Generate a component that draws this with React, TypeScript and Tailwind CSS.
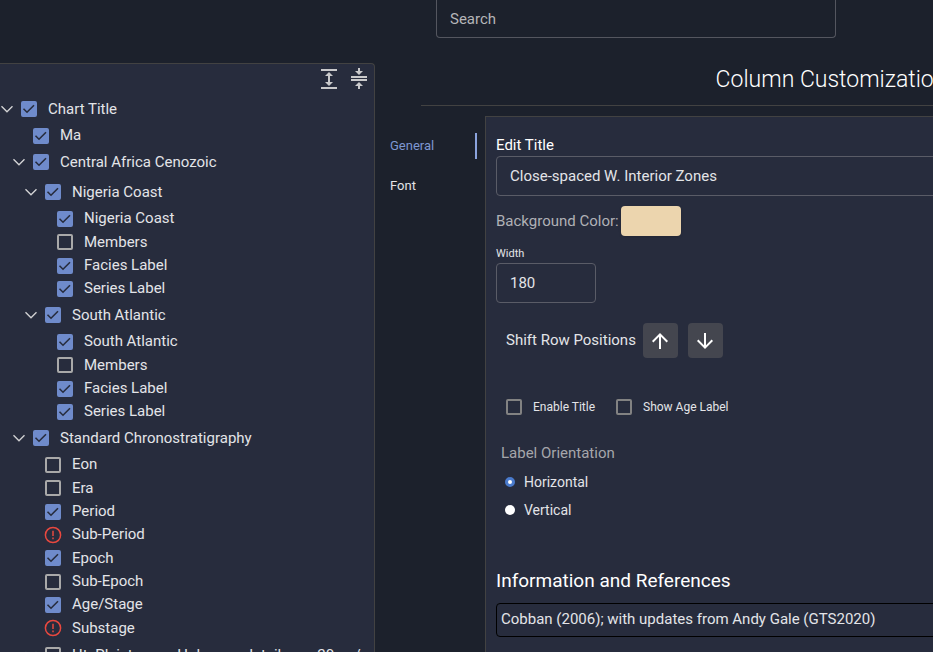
import React, { useState } from "react";

type Node = {
  label: string;
  state?: "on" | "off" | "error";
  children?: Node[];
};

const facies = (name: string): Node => ({
  label: name,
  children: [
    { label: name },
    { label: "Members", state: "off" },
    { label: "Facies Label" },
    { label: "Series Label" },
  ],
});

const tree: Node = {
  label: "Chart Title",
  children: [
    { label: "Ma" },
    {
      label: "Central Africa Cenozoic",
      children: [facies("Nigeria Coast"), facies("South Atlantic")],
    },
    {
      label: "Standard Chronostratigraphy",
      children: [
        { label: "Eon", state: "off" },
        { label: "Era", state: "off" },
        { label: "Period" },
        { label: "Sub-Period", state: "error" },
        { label: "Epoch" },
        { label: "Sub-Epoch", state: "off" },
        { label: "Age/Stage" },
        { label: "Substage", state: "error" },
        {
          label: "Ht. Pleistocene-Holocene detail over 20my/",
          state: "off",
          children: [],
        },
      ],
    },
  ],
};

function Tick({ label, on, dim }: { label: string; on: boolean; dim?: boolean }) {
  const [checked, setChecked] = useState(on);
  return (
    <span className="relative flex size-4 shrink-0">
      <input
        type="checkbox"
        aria-label={label}
        checked={checked}
        onChange={() => setChecked(!checked)}
        className={
          "size-4 appearance-none rounded-xs border-2 checked:border-[#6f8bcb] checked:bg-[#6f8bcb] " +
          (dim ? "border-[#828282]" : "border-[#a9a9a9]")
        }
      />
      {checked && (
        <svg viewBox="0 0 16 16" className="pointer-events-none absolute inset-0 size-4" fill="none" stroke="#272c3d" strokeWidth="1.6">
          <path d="M2.5 7.8 6 11.2 13 4.2" />
        </svg>
      )}
    </span>
  );
}

function ErrorIcon() {
  return (
    <svg viewBox="0 0 18 18" className="-mx-px size-[18px] shrink-0" fill="none" stroke="#e8483f" strokeWidth="1.5">
      <circle cx="9" cy="9" r="7.6" />
      <path d="M9 4.8v5.2M9 11.5v1.7" />
    </svg>
  );
}

function Branch({ node }: { node: Node }) {
  const branch = !!node.children;
  return (
    <li className={branch ? "" : "h-[23px] nth-[3n+2]:h-6"}>
      <div className={"flex items-center whitespace-nowrap " + (branch ? "h-[30px]" : "h-full")}>
        <span className="flex w-[21px] shrink-0">
          {branch && (
            <button aria-label={"Toggle " + node.label}>
              <svg viewBox="0 0 14 14" className="size-3.5" fill="none" stroke="#d0d0d2" strokeWidth="1.4">
                <path d="M1.5 4.2 7 9.8l5.5-5.6" />
              </svg>
            </button>
          )}
        </span>
        {node.state === "error" ? <ErrorIcon /> : <Tick label={node.label} on={node.state !== "off"} />}
        <span className="ml-[11px]">{node.label}</span>
      </div>
      {branch && (
        <ul className="pl-3">
          {node.children!.map((child) => (
            <Branch key={child.label} node={child} />
          ))}
        </ul>
      )}
    </li>
  );
}

function ShiftButton({ label, d }: { label: string; d: string }) {
  return (
    <button aria-label={label} className="flex size-[35px] items-center justify-center rounded bg-[#44464f]">
      <svg viewBox="0 0 24 24" className="size-6" fill="#fff">
        <path d={d} />
      </svg>
    </button>
  );
}

export default function App() {
  return (
    <div className="flex h-screen flex-col overflow-hidden bg-[#1c212c] font-['Roboto','Liberation_Sans',sans-serif] text-[15px] text-[#e3e4e8]">
      <header className="flex h-[63px] shrink-0 items-start pl-[436px]">
        <input
          aria-label="Search"
          placeholder="Search"
          className="h-[38px] w-[400px] rounded-b border border-t-0 border-[#54565f] bg-transparent px-[13px] placeholder:text-[#b5b5b8]"
        />
      </header>
      <main className="flex min-h-0 flex-1">
        <aside className="w-[375px] shrink-0 overflow-hidden rounded-tr border-t border-r border-[#424242] bg-[#272c3d]">
          <div className="flex h-[30px] items-center justify-end gap-1.5 pr-[3px]">
            <button aria-label="Expand all">
              <svg viewBox="0 0 24 24" className="size-6" fill="#c9c9cb">
                <path d="M4 2h16v2H4zM4 20h16v2H4zM13 9h3l-4-4-4 4h3v6H8l4 4 4-4h-3z" />
              </svg>
            </button>
            <button aria-label="Collapse all">
              <svg viewBox="0 0 24 24" className="size-6" fill="#c9c9cb">
                <path d="M8 19h3v3h2v-3h3l-4-4zM16 4h-3V1h-2v3H8l4 4zM4 9v2h16V9zM4 12v2h16v-2z" />
              </svg>
            </button>
          </div>
          <ul>
            <Branch node={tree} />
          </ul>
        </aside>
        <section className="flex min-w-0 flex-1 flex-col">
          <h1 className="ml-[46px] flex h-[43px] min-w-[820px] items-center justify-center border-b border-[#424242] pb-2 text-[23px] font-light text-white">
            Column Customization
          </h1>
          <div className="flex min-h-0 flex-1 pt-2.5">
            <nav className="flex w-[110px] shrink-0 flex-col pt-2.5 pl-[15px] text-[13px]">
              <button className="flex h-10 items-center text-left text-[#7e97d2]">
                <span className="w-[85px]">General</span>
                <span className="h-[26px] w-0.5 bg-[#8ba3dd]" />
              </button>
              <button className="flex h-10 items-center text-left">Font</button>
            </nav>
            <div className="min-w-[760px] flex-1 border-t border-l border-[#424242] bg-[#272c3d] px-2.5">
              <label className="flex flex-col pt-4">
                <span className="h-[23px] leading-6 text-white">Edit Title</span>
                <input defaultValue="Close-spaced W. Interior Zones" className="h-10 rounded border border-[#5a5c67] bg-transparent px-[13px]" />
              </label>
              <div className="flex h-[50px] items-center gap-0.5">
                <span className="text-[#b0b1b6]">Background Color:</span>
                <button aria-label="Background color" className="h-[30px] w-[60px] rounded bg-[#ecd5ae] shadow" />
              </div>
              <label className="flex flex-col">
                <span className="h-[17px] text-[11px] leading-4">Width</span>
                <input defaultValue="180" className="h-10 w-[100px] rounded border border-[#5a5c67] bg-transparent px-[13px]" />
              </label>
              <div className="flex items-center gap-2.5 pt-5 pl-2.5">
                <span className="-mr-[3px]">Shift Row Positions</span>
                <ShiftButton label="Shift up" d="m4 12 1.41 1.41L11 7.83V20h2V7.83l5.58 5.59L20 12l-8-8z" />
                <ShiftButton label="Shift down" d="m20 12-1.41-1.41L13 16.17V4h-2v12.17l-5.58-5.59L4 12l8 8z" />
              </div>
              <div className="flex h-[98px] items-center gap-[21px] pl-2.5 text-xs">
                <label className="flex items-center gap-[11px]">
                  <Tick label="Enable Title" on={false} dim />
                  Enable Title
                </label>
                <label className="flex items-center gap-[11px]">
                  <Tick label="Show Age Label" on={false} dim />
                  Show Age Label
                </label>
              </div>
              <fieldset className="-mt-3.5 pl-[5px]">
                <legend className="text-[#a5a6ab]">Label Orientation</legend>
                <div className="flex flex-col pt-[3px] pl-1 text-sm">
                  {["Horizontal", "Vertical"].map((name, i) => (
                    <label key={name} className="flex h-7 items-center gap-[9px]">
                      <input
                        type="radio"
                        name="orientation"
                        defaultChecked={i === 0}
                        className="size-2.5 appearance-none rounded-full border-0 bg-white checked:border-3 checked:border-[#4a7bcd]"
                      />
                      {name}
                    </label>
                  ))}
                </div>
              </fieldset>
              <h2 className="pt-[43px] text-[19px] leading-7 text-white">Information and References</h2>
              <p className="mt-2 flex h-[34px] items-center rounded border border-black px-1">
                Cobban (2006); with updates from Andy Gale (GTS2020)
              </p>
            </div>
          </div>
        </section>
      </main>
    </div>
  );
}
